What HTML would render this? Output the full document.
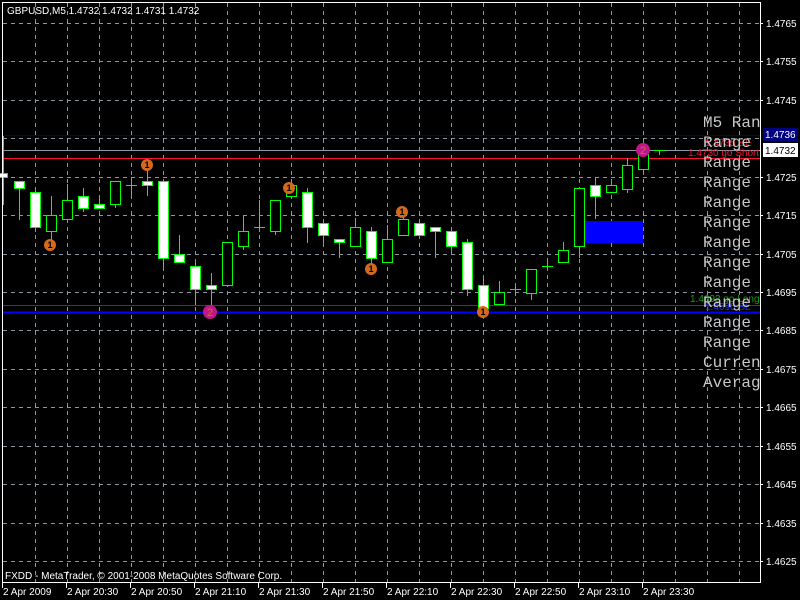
<!DOCTYPE html>
<html><head><meta charset="utf-8"><style>
html,body{margin:0;padding:0;background:#000;width:800px;height:600px;overflow:hidden}
svg{display:block}
.t{font-family:"Liberation Sans",sans-serif;font-size:10px;fill:#fff}
.r{font-family:"Liberation Mono",monospace;font-size:16px;fill:#c8c8c8}
.s{font-family:"Liberation Sans",sans-serif;font-size:10px}
</style></head><body>
<svg width="800" height="600" viewBox="0 0 800 600" xmlns="http://www.w3.org/2000/svg">
<defs><clipPath id="c"><rect x="0" y="0" width="760" height="600"/></clipPath></defs>
<rect width="800" height="600" fill="#000"/>
<g stroke="#8a96a0" stroke-width="1" stroke-dasharray="4,4" fill="none">
<path d="M3 23.5H760M3 61.5H760M3 100.5H760M3 138.5H760M3 177.5H760M3 215.5H760M3 254.5H760M3 292.5H760M3 330.5H760M3 369.5H760M3 407.5H760M3 446.5H760M3 484.5H760M3 523.5H760M3 561.5H760"/>
<path d="M35.5 3V583M67.5 3V583M99.5 3V583M131.5 3V583M163.5 3V583M195.5 3V583M227.5 3V583M259.5 3V583M291.5 3V583M323.5 3V583M355.5 3V583M387.5 3V583M419.5 3V583M451.5 3V583M483.5 3V583M515.5 3V583M547.5 3V583M579.5 3V583M611.5 3V583M643.5 3V583M675.5 3V583M707.5 3V583M739.5 3V583"/>
</g>
<rect x="585" y="221" width="58" height="22" fill="#0000ff"/>
<line x1="3" y1="135.5" x2="760" y2="135.5" stroke="#000080"/>
<line x1="3" y1="150.5" x2="760" y2="150.5" stroke="#8a96a0"/>
<line x1="3" y1="158.5" x2="760" y2="158.5" stroke="#ff1030"/>
<line x1="3" y1="305.5" x2="760" y2="305.5" stroke="#106010"/>
<line x1="3" y1="312.5" x2="760" y2="312.5" stroke="#0000ff" stroke-width="2"/>
<g stroke="#00ff00" stroke-width="1">
<path d="M3.5 136V205M19.5 181V220M35.5 188V232M51.5 196V245M67.5 184V219M83.5 188V212M99.5 195V208M115.5 181V208M131.5 178V196M147.5 165V196M163.5 181V268M179.5 235V262M195.5 262V305M211.5 273V305M227.5 242V287M243.5 215V250M259.5 200V232M275.5 200V235M291.5 181V196M307.5 188V243M323.5 223V243M339.5 239V258M355.5 218V246M371.5 227V268M387.5 225V262M403.5 212V235M419.5 223V235M435.5 227V258M451.5 231V251M467.5 239V296M483.5 277V312M499.5 281V304M515.5 287V296M531.5 269V300M547.5 258V268M563.5 242V262M579.5 188V258M595.5 177V219M611.5 181V192M627.5 158V193M643.5 150V173M659.5 150V155"/>
<path d="M126 185.5H137M254 227.5H265M510 289.5H521M542 266.5H553M654 150.5H665"/>
</g>
<g stroke="#00ff00" stroke-width="1">
<rect x="-2.5" y="173.5" width="10" height="4" fill="#fff"/>
<rect x="14.5" y="181.5" width="10" height="7" fill="#fff"/>
<rect x="30.5" y="192.5" width="10" height="35" fill="#fff"/>
<rect x="46.5" y="215.5" width="10" height="16" fill="#000"/>
<rect x="62.5" y="200.5" width="10" height="19" fill="#000"/>
<rect x="78.5" y="196.5" width="10" height="12" fill="#fff"/>
<rect x="94.5" y="204.5" width="10" height="4" fill="#fff"/>
<rect x="110.5" y="181.5" width="10" height="23" fill="#000"/>
<rect x="142.5" y="181.5" width="10" height="4" fill="#fff"/>
<rect x="158.5" y="181.5" width="10" height="77" fill="#fff"/>
<rect x="174.5" y="254.5" width="10" height="8" fill="#fff"/>
<rect x="190.5" y="266.5" width="10" height="23" fill="#fff"/>
<rect x="206.5" y="285.5" width="10" height="4" fill="#fff"/>
<rect x="222.5" y="242.5" width="10" height="43" fill="#000"/>
<rect x="238.5" y="231.5" width="10" height="15" fill="#000"/>
<rect x="270.5" y="200.5" width="10" height="31" fill="#000"/>
<rect x="286.5" y="185.5" width="10" height="11" fill="#000"/>
<rect x="302.5" y="192.5" width="10" height="35" fill="#fff"/>
<rect x="318.5" y="223.5" width="10" height="12" fill="#fff"/>
<rect x="334.5" y="239.5" width="10" height="3" fill="#fff"/>
<rect x="350.5" y="227.5" width="10" height="19" fill="#000"/>
<rect x="366.5" y="231.5" width="10" height="27" fill="#fff"/>
<rect x="382.5" y="239.5" width="10" height="23" fill="#000"/>
<rect x="398.5" y="219.5" width="10" height="16" fill="#000"/>
<rect x="414.5" y="223.5" width="10" height="12" fill="#fff"/>
<rect x="430.5" y="227.5" width="10" height="4" fill="#fff"/>
<rect x="446.5" y="231.5" width="10" height="15" fill="#fff"/>
<rect x="462.5" y="242.5" width="10" height="47" fill="#fff"/>
<rect x="478.5" y="285.5" width="10" height="23" fill="#fff"/>
<rect x="494.5" y="292.5" width="10" height="12" fill="#000"/>
<rect x="526.5" y="269.5" width="10" height="24" fill="#000"/>
<rect x="558.5" y="250.5" width="10" height="12" fill="#000"/>
<rect x="574.5" y="188.5" width="10" height="58" fill="#000"/>
<rect x="590.5" y="185.5" width="10" height="11" fill="#fff"/>
<rect x="606.5" y="185.5" width="10" height="7" fill="#000"/>
<rect x="622.5" y="165.5" width="10" height="24" fill="#000"/>
<rect x="638.5" y="154.5" width="10" height="15" fill="#000"/>
</g>
<g fill="#d2691e">
<circle cx="147" cy="165" r="6"/><circle cx="50" cy="245" r="6"/><circle cx="289" cy="188" r="6"/><circle cx="371" cy="269" r="6"/><circle cx="402" cy="212" r="6"/><circle cx="483" cy="312" r="6"/>
</g>
<g fill="#c0168a"><circle cx="210" cy="312" r="7"/><circle cx="643" cy="150" r="7"/></g>
<g font-family="Liberation Sans,sans-serif" font-size="9" font-weight="bold" fill="#000" text-anchor="middle">
<text x="147" y="168">1</text><text x="50" y="248">1</text><text x="289" y="191">1</text><text x="371" y="272">1</text><text x="402" y="215">1</text><text x="483" y="315">1</text>
</g>
<g font-family="Liberation Sans,sans-serif" font-size="11" fill="#d2691e" text-anchor="middle"><text x="210" y="316">2</text><text x="643" y="154">2</text></g>
<text class="s" x="705" y="146" fill="#ff1030">1.4735 BE</text>
<text class="s" x="688" y="156" fill="#ff1030">1.4730 go Short</text>
<text class="s" x="690" y="302" fill="#10a010">1.4692 go Long</text>
<text class="s" x="705" y="310" fill="#2030ff">1.4690 SL</text>
<g class="r" clip-path="url(#c)">
<text x="703" y="127">M5 Range</text>
<text x="703" y="147">Range</text><text x="703" y="167">Range</text><text x="703" y="187">Range</text><text x="703" y="207">Range</text><text x="703" y="227">Range</text><text x="703" y="247">Range</text><text x="703" y="267">Range</text><text x="703" y="287">Range</text><text x="703" y="307">Range</text><text x="703" y="327">Range</text><text x="703" y="347">Range</text>
<text x="703" y="367">Current</text><text x="703" y="387">Average</text>
</g>
<rect x="2.5" y="2.5" width="758" height="580" fill="none" stroke="#fff"/>
<text class="t" x="7" y="14">GBPUSD,M5  1.4732 1.4732 1.4731 1.4732</text>
<text class="t" x="5" y="579">FXDD - MetaTrader, © 2001-2008 MetaQuotes Software Corp.</text>
<g class="t">
<text x="766" y="27">1.4765</text><text x="766" y="65">1.4755</text><text x="766" y="104">1.4745</text><text x="766" y="181">1.4725</text><text x="766" y="219">1.4715</text><text x="766" y="258">1.4705</text><text x="766" y="296">1.4695</text><text x="766" y="334">1.4685</text><text x="766" y="373">1.4675</text><text x="766" y="411">1.4665</text><text x="766" y="450">1.4655</text><text x="766" y="488">1.4645</text><text x="766" y="527">1.4635</text><text x="766" y="565">1.4625</text>
</g>
<g stroke="#fff"><path d="M760 23.5h3M760 61.5h3M760 100.5h3M760 177.5h3M760 215.5h3M760 254.5h3M760 292.5h3M760 330.5h3M760 369.5h3M760 407.5h3M760 446.5h3M760 484.5h3M760 523.5h3M760 561.5h3"/>
<path d="M2.5 583v5M66.5 583v5M130.5 583v5M194.5 583v5M258.5 583v5M322.5 583v5M386.5 583v5M450.5 583v5M514.5 583v5M578.5 583v5M642.5 583v5"/></g>
<rect x="763" y="128" width="35" height="13" fill="#000080"/>
<text class="t" x="765" y="138">1.4736</text>
<rect x="763" y="143" width="35" height="14" fill="#fff"/>
<text class="t" x="765" y="154" style="fill:#000">1.4732</text>
<g class="t">
<text x="3" y="595">2 Apr 2009</text><text x="67" y="595">2 Apr 20:30</text><text x="131" y="595">2 Apr 20:50</text><text x="195" y="595">2 Apr 21:10</text><text x="259" y="595">2 Apr 21:30</text><text x="323" y="595">2 Apr 21:50</text><text x="387" y="595">2 Apr 22:10</text><text x="451" y="595">2 Apr 22:30</text><text x="515" y="595">2 Apr 22:50</text><text x="579" y="595">2 Apr 23:10</text><text x="643" y="595">2 Apr 23:30</text>
</g>
</svg>
</body></html>
